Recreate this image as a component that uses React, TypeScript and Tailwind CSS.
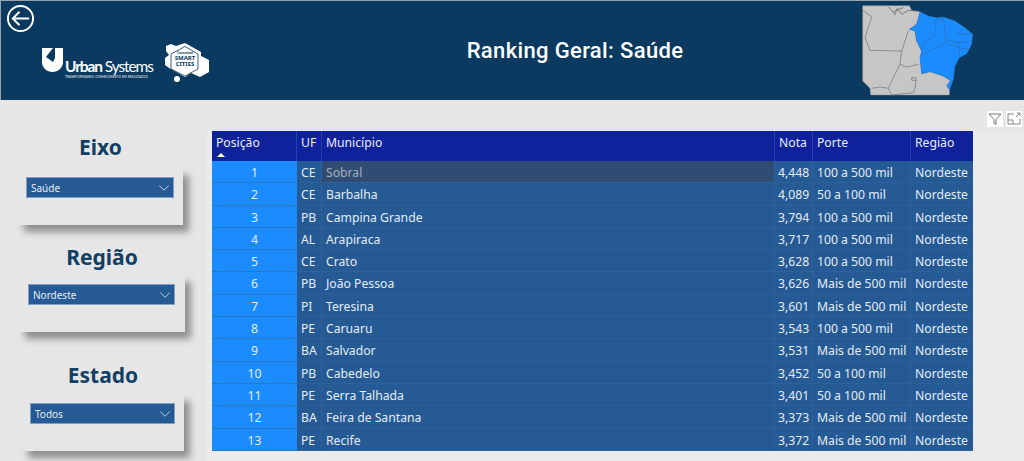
import { ChevronDown } from "lucide-react"

const ROWS = [
  { pos: 1, uf: "CE", city: "Sobral", nota: "4,448", porte: "100 a 500 mil" },
  { pos: 2, uf: "CE", city: "Barbalha", nota: "4,089", porte: "50 a 100 mil" },
  { pos: 3, uf: "PB", city: "Campina Grande", nota: "3,794", porte: "100 a 500 mil" },
  { pos: 4, uf: "AL", city: "Arapiraca", nota: "3,717", porte: "100 a 500 mil" },
  { pos: 5, uf: "CE", city: "Crato", nota: "3,628", porte: "100 a 500 mil" },
  { pos: 6, uf: "PB", city: "João Pessoa", nota: "3,626", porte: "Mais de 500 mil" },
  { pos: 7, uf: "PI", city: "Teresina", nota: "3,601", porte: "Mais de 500 mil" },
  { pos: 8, uf: "PE", city: "Caruaru", nota: "3,543", porte: "100 a 500 mil" },
  { pos: 9, uf: "BA", city: "Salvador", nota: "3,531", porte: "Mais de 500 mil" },
  { pos: 10, uf: "PB", city: "Cabedelo", nota: "3,452", porte: "50 a 100 mil" },
  { pos: 11, uf: "PE", city: "Serra Talhada", nota: "3,401", porte: "50 a 100 mil" },
  { pos: 12, uf: "BA", city: "Feira de Santana", nota: "3,373", porte: "Mais de 500 mil" },
  { pos: 13, uf: "PE", city: "Recife", nota: "3,372", porte: "Mais de 500 mil" },
]

function Slicer({ title, value, className, panelClass }: { title: string; value: string; className: string; panelClass: string }) {
  return (
    <div className={className}>
      <h2 className="text-center text-[21px] leading-[28px] font-bold text-[#123f63]">{title}</h2>
      <div className={`h-[57px] bg-[#e6e6e6] pt-[9px] shadow-[6px_7px_7px_rgba(0,0,0,0.38)] ${panelClass}`}>
        <div className="flex h-[21px] items-center justify-between border border-[#7f9fc4] bg-[#265a94] pt-px pl-1 text-[10px] text-[#e4ecf5]">
          {value}
          <ChevronDown className="h-[18px] w-[18px] text-[#dfe8f2]" strokeWidth={1.1} />
        </div>
      </div>
    </div>
  )
}

function BrazilMap() {
  return (
    <svg viewBox="0 0 552 300" className="h-[100px] w-[184px] shrink-0">
      <path fill="#c8c6c4" stroke="#8a8b8c" strokeWidth="1.5" d="M68 14 L208 14 L215 28 L240 32 L230 70 L208 85 L225 90 L230 120 L245 150 L240 170 L245 218 L270 212 L310 225 L330 238 L328 282 L92 282 L90 262 L68 240 Z" />
      <path fill="none" stroke="#6f7072" strokeWidth="2" d="M68 28 L95 48 L75 110 L90 148 L185 150 L205 90 M185 150 L180 190 L200 198 L235 190 M180 190 L155 240 L145 262 L120 258 L95 262 M145 262 L155 282 M215 230 H228 V238 H215 Z M228 238 L225 262 L220 275 L155 282" />
      <path fill="none" stroke="#55585c" strokeWidth="2" d="M145 18 L165 40 L172 22 L185 40 L205 28 L235 30 M160 32 L190 20" />
      <path fill="#1a8cff" stroke="#3a78b5" strokeWidth="1" d="M240 32 L265 45 L290 50 L310 48 L345 60 L375 80 L398 100 L395 130 L380 158 L358 170 L345 195 L340 235 L328 268 L320 255 L330 238 L310 225 L270 212 L245 218 L240 170 L245 150 L230 120 L225 90 L208 85 L230 70 Z" />
      <path fill="none" stroke="#2f6fae" strokeWidth="2" d="M310 50 L285 60 L288 100 L275 110 L248 125 L245 150 M310 52 L315 90 L318 115 L310 130 L275 145 L250 160 M315 115 L355 125 L395 120 M355 125 L358 155 L358 170 M355 100 L395 100 M348 100 L365 85 M320 130 L355 140 L385 145" />
    </svg>
  )
}

function UrbanLogo() {
  return (
    <div className="mt-[5px] flex w-[108px] items-start">
      <svg viewBox="0 0 21 24" className="h-[24px] w-[21px] shrink-0">
        <path fill="#fff" d="M0 0 H11 L4 9 L11 14 L13 10 V0 H21 V14 C21 20 16 24 10.5 24 C5 24 0 20 0 14 Z" />
      </svg>
      <div className="mt-[10px] ml-[2px] flex flex-col font-['Lato',sans-serif] text-white">
        <span className="text-[15.5px] leading-[16px] tracking-[-1.1px] whitespace-nowrap">
          <span className="font-bold">Urban</span> Systems
        </span>
        <span className="mt-[1px] text-[3px] leading-[4px] font-bold tracking-[0.12px] whitespace-nowrap text-[#c9d5df]">TRANSFORMANDO CONHECIMENTO EM RESULTADOS</span>
      </div>
    </div>
  )
}

function SmartCitiesLogo() {
  return (
    <div className="relative h-[40px] w-[47px]">
      <svg viewBox="0 0 47 40" className="h-[40px] w-[47px]">
        <path fill="#fff" d="M21 0 L37 9 V13 L45 17 V29 L36 34 L27 30 L21 34 L5 25 L1 22 V15 L5 12 L2 8 V3 L7 1 L12 3 Z" />
        <circle cx="13" cy="36" r="3" fill="#fff" />
        <path fill="none" stroke="#0b3a60" strokeWidth="0.8" d="M21 3.5 L34 11 V26 L21 33 L7 26 V11 Z" />
      </svg>
      <div className="absolute top-[8px] left-[7px] w-[28px] text-center font-bold text-[#0b3a60]">
        <div className="text-[3px] leading-[4px]">Connected</div>
        <div className="text-[6px] leading-[6px]">SMART</div>
        <div className="text-[6px] leading-[6px]">CITIES</div>
      </div>
    </div>
  )
}

export default function App() {
  return (
    <div className="flex h-[461px] w-[1024px] flex-col overflow-hidden bg-[#e6e6e6] font-['Noto_Sans',sans-serif]">
      {/* Header */}
      <header className="flex h-[100px] shrink-0 border-t border-l border-[#9aa3aa] bg-[#0b3a60] border-b-[#b8bfc5]">
        <div className="w-[300px] shrink-0 pl-[5px] pt-[3px]">
          <svg viewBox="0 0 30 30" className="h-[29px] w-[29px]" fill="none" stroke="#fff">
            <circle cx="15" cy="15" r="13" strokeWidth="2" />
            <path d="M24 15 H7 M14 8 L7 15 L14 22" strokeWidth="2" />
          </svg>
          <div className="mt-[10px] ml-[36px] flex items-start gap-[14px]">
            <UrbanLogo />
            <SmartCitiesLogo />
          </div>
        </div>
        <div className="flex flex-1 items-center justify-center pl-[9px]">
          <h1 className="text-[22px] font-medium tracking-[0.35px] text-white font-['Roboto',sans-serif]">Ranking Geral: Saúde</h1>
        </div>
        <BrazilMap />
      </header>

      <div className="flex flex-1">
        {/* Filters */}
        <aside className="w-[207px] shrink-0">
          <Slicer title="Eixo" value="Saúde" className="mt-[33px] ml-[18px] w-[165px]" panelClass="mt-[7px] pl-[8px] pr-[9px]" />
          <Slicer title="Região" value="Nordeste" className="mt-[18px] ml-[19px] w-[166px]" panelClass="mt-[4px] pl-[9px] pr-[10px]" />
          <Slicer title="Estado" value="Todos" className="mt-[29px] ml-[22px] w-[162px]" panelClass="mt-[5px] pl-[8px] pr-[9px]" />
        </aside>

        {/* Table */}
        <main className="flex flex-1 flex-col">
          <div className="flex h-[31px] justify-end gap-[3px] pt-[11px] pr-[2px]">
            <div className="flex h-[16px] w-[16px] items-center justify-center bg-white">
              <svg viewBox="0 0 14 14" className="h-[14px] w-[14px]" fill="none" stroke="#777" strokeWidth="1">
                <path d="M1 2 H13 L8 7.5 V12.5 L6 11.5 V7.5 Z" />
              </svg>
            </div>
            <div className="flex h-[16px] w-[16px] items-center justify-center bg-white">
              <svg viewBox="0 0 14 14" className="h-[14px] w-[14px]" fill="none" stroke="#888" strokeWidth="1">
                <path d="M7 2 H1 V12 H13 V7 M1 8 H6 V12 M9 5 L13 1 M10 1 H13 V4" />
              </svg>
            </div>
          </div>
          <div className="flex-1 bg-[#ebebeb] pl-[5px]">
            <div className="w-[761px] text-[12.2px] leading-[23.5px] text-[#e4ecf5]">
              <div className="flex h-[30px] bg-[#10219c] leading-[23px] text-[#e8ecfa]">
                <div className="w-[85px] border-r border-[#2b3cae] pl-1">
                  Posição
                  <div className="-mt-[1px] ml-[1px] h-0 w-0 border-x-[4.5px] border-b-[4px] border-x-transparent border-b-white" />
                </div>
                <div className="w-[25px] border-r border-[#2b3cae] pl-1">UF</div>
                <div className="w-[453px] border-r border-[#2b3cae] pl-1">Município</div>
                <div className="w-[38px] border-r border-[#2b3cae] pl-1">Nota</div>
                <div className="w-[98px] border-r border-[#2b3cae] pl-1">Porte</div>
                <div className="w-[62px] pl-1">Região</div>
              </div>
              {ROWS.map((r) => (
                <div key={r.pos} className="flex h-[22.3px] bg-[#265a94]">
                  <div className="w-[85px] border-b border-[#2a78c8] bg-[#1a8cff] text-center">{r.pos}</div>
                  <div className="w-[25px] border-r border-b border-[#2f6199] pl-1">{r.uf}</div>
                  <div className={`w-[453px] border-r border-b border-[#2f6199] pl-1 ${r.pos === 1 ? "bg-[#2f4d73] text-[#a7aeb7]" : ""}`}>{r.city}</div>
                  <div className="w-[38px] border-r border-b border-[#2f6199] pl-[3px]">{r.nota}</div>
                  <div className="w-[98px] border-r border-b border-[#2f6199] pl-1 whitespace-nowrap">{r.porte}</div>
                  <div className="w-[62px] border-b border-[#2f6199] pl-1">Nordeste</div>
                </div>
              ))}
            </div>
          </div>
        </main>
      </div>
    </div>
  )
}
